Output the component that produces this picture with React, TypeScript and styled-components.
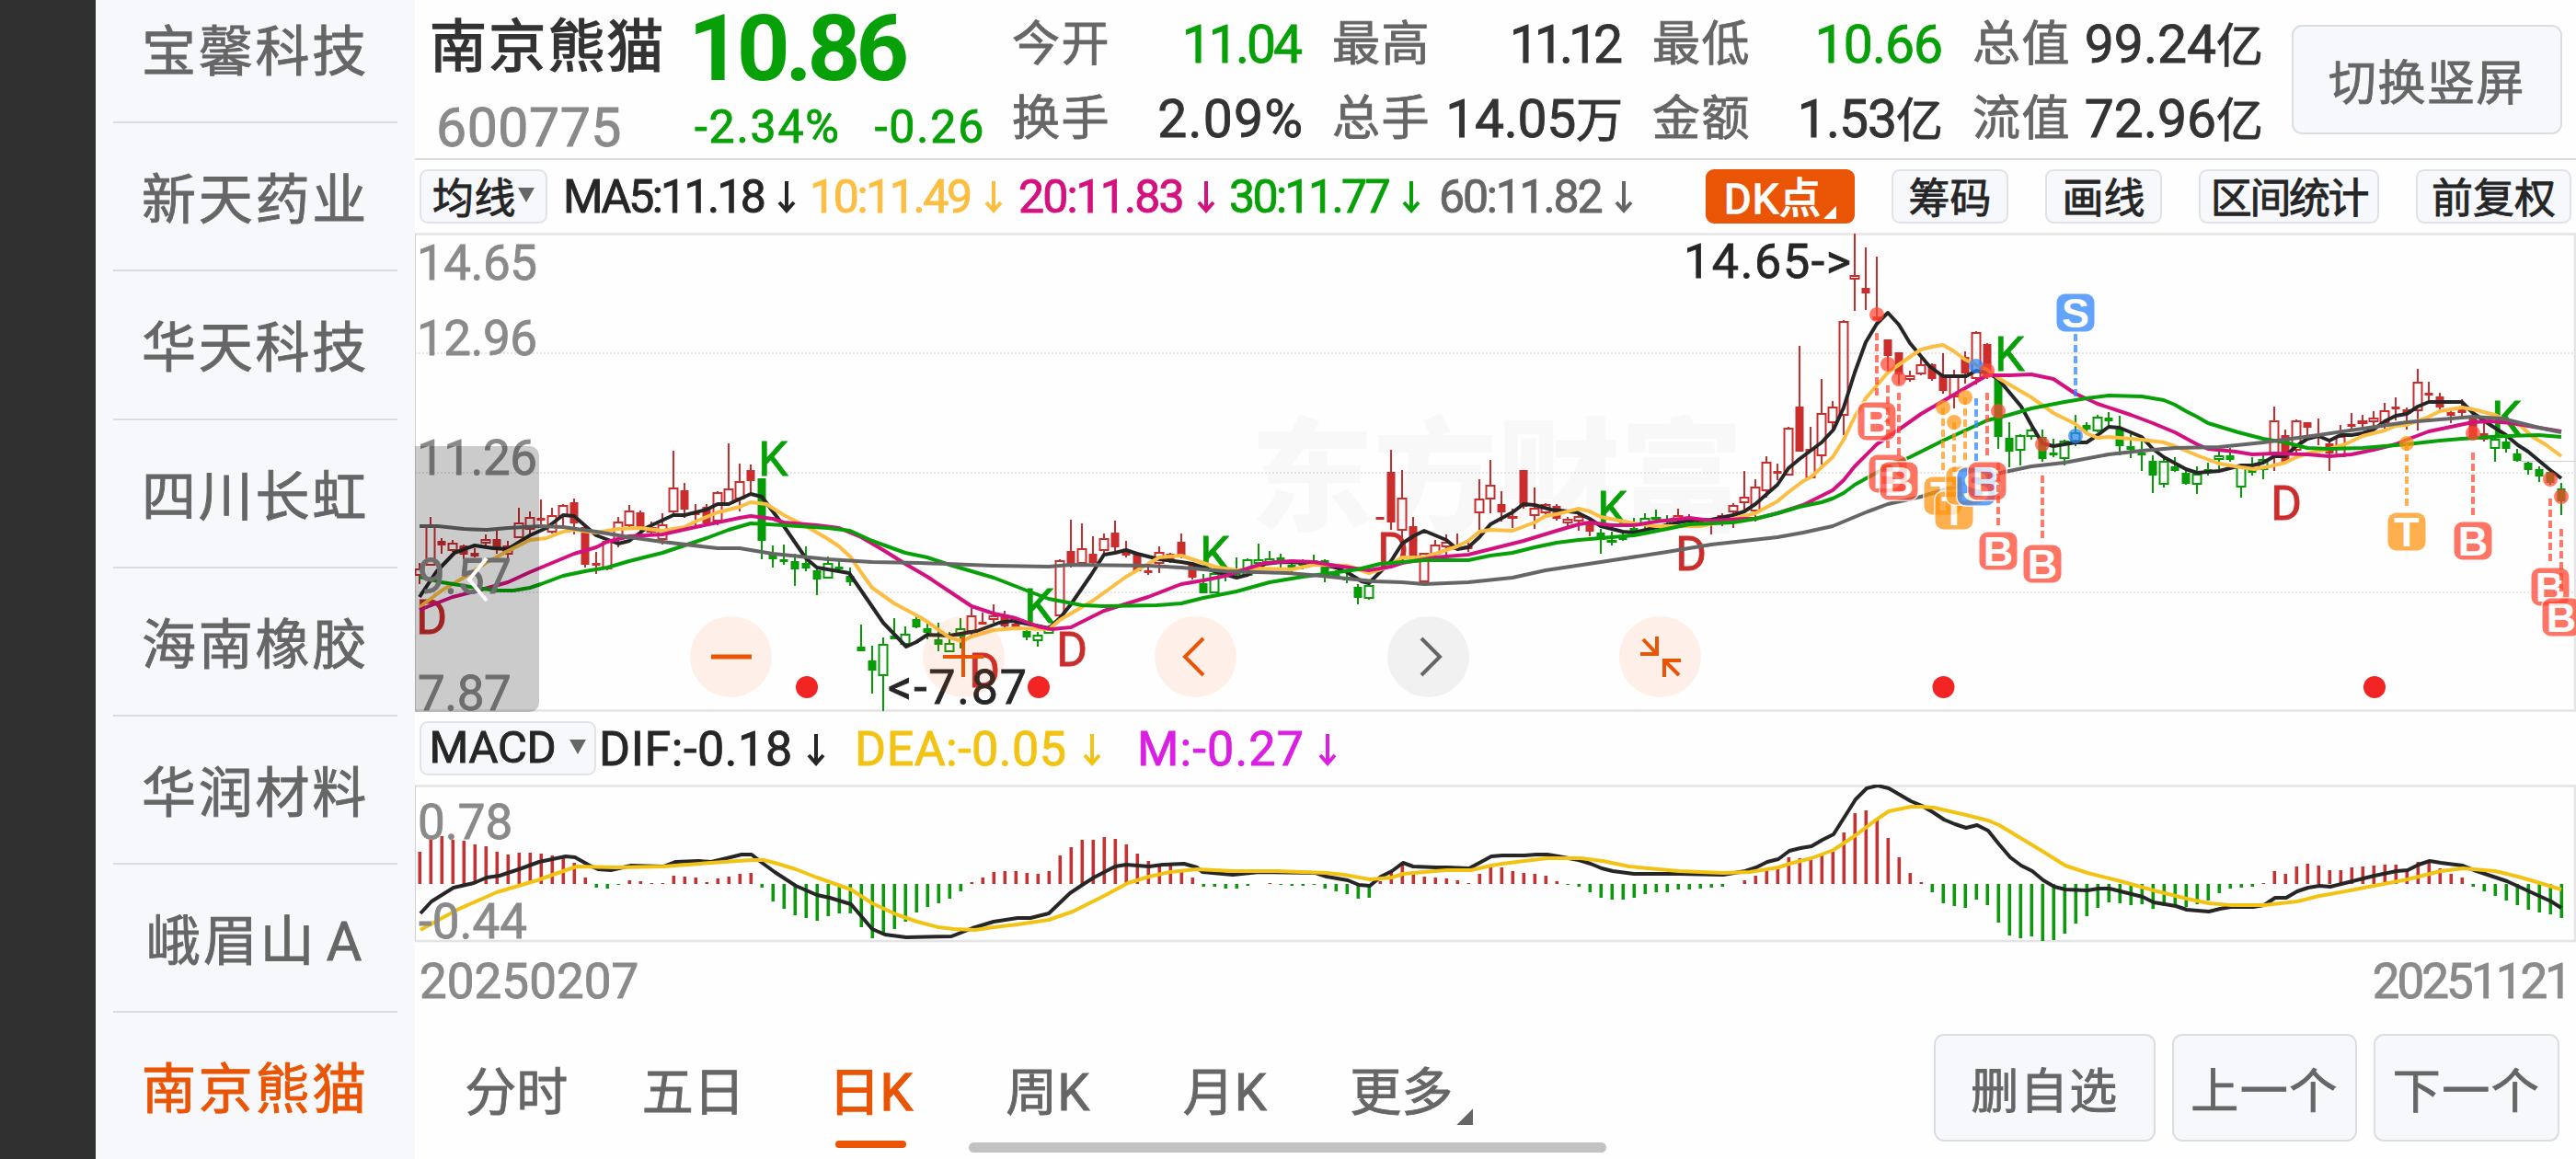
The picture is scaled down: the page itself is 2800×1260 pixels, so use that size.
import styled, { createGlobalStyle } from 'styled-components';

const GlobalStyle = createGlobalStyle`
	* {
		box-sizing: border-box;
	}
	body {
		margin: 0;
		background: #fff;
		font-family: Roboto, 'Noto Sans CJK SC', sans-serif;
		-webkit-text-stroke: 0.9px;
		overflow: hidden;
	}
`;

const Screen = styled.div`
	display: flex;
	width: 2800px;
	height: 1260px;
	overflow: hidden;
	background: #fefefe;
`;

const Notch = styled.div`
	flex: none;
	width: 104px;
	background: #303030;
`;

const Sidebar = styled.nav`
	flex: none;
	width: 347px;
	padding: 0 19px;
	background: #f6f8fb;
`;

const StockItem = styled.div<{ $active?: boolean }>`
	display: flex;
	align-items: center;
	justify-content: center;
	height: 161.2px;
	padding-bottom: 2px;
	border-bottom: 2px solid #d9dce0;
	font-size: 59px;
	letter-spacing: 2.8px;
	word-spacing: -7px;
	color: ${({ $active }) => ($active ? '#e95504' : '#666')};
	white-space: pre;

	&:first-child {
		margin-top: -27px;
	}
`;

const Main = styled.main`
	display: flex;
	flex-direction: column;
	width: 2349px;
`;

const Header = styled.header`
	display: flex;
	height: 174px;
	border-bottom: 2px solid #d9d9d9;
`;

const Quote = styled.div`
	display: grid;
	grid-template-columns: 281px 340px;
	grid-template-rows: 104px 68px;
	width: 649px;
	padding-left: 16px;
	align-items: center;
	line-height: 1;
`;

const Name = styled.div`
	font-size: 62px;
	letter-spacing: 2.2px;
	color: #333;
	white-space: nowrap;
	-webkit-text-stroke: 1.6px;
`;

const Price = styled.div`
	font-size: 101px;
	font-weight: 700;
	letter-spacing: -5.2px;
	color: #08a008;
	-webkit-text-stroke: 0;
`;

const Code = styled.div`
	padding-left: 7px;
	font-size: 59px;
	letter-spacing: 0.5px;
	color: #8a8a8a;
`;

const Change = styled.div`
	display: flex;
	gap: 37px;
	padding-left: 7px;
	font-size: 50px;
	letter-spacing: 1.8px;
	color: #08a008;
`;

const Stats = styled.div`
	display: grid;
	grid-template-columns: repeat(4, 316px);
	grid-template-rows: 81px 81px;
	column-gap: 32px;
	padding-top: 8px;
	line-height: 1;
`;

const Stat = styled.div`
	display: flex;
	align-items: center;
	justify-content: space-between;
	white-space: nowrap;
`;

const StatLabel = styled.span`
	font-size: 52px;
	letter-spacing: 1.5px;
	color: #666;
`;

const StatValue = styled.span<{ $down?: boolean; $spacing: number }>`
	margin-right: ${({ $spacing }) => -$spacing}px;
	font-size: 57px;
	letter-spacing: ${({ $spacing }) => $spacing}px;
	color: ${({ $down }) => ($down ? '#08a008' : '#333')};
`;

const Unit = styled.span`
	font-size: 51px;
`;

const PanelButton = styled.button<{ $width: number; $height: number }>`
	flex: none;
	width: ${({ $width }) => $width}px;
	height: ${({ $height }) => $height}px;
	padding: 0;
	border: 2px solid #dadee4;
	border-radius: 11px;
	background: #f6f8fb;
	color: #666;
	font-family: inherit;
	font-size: 52px;
	letter-spacing: 1.5px;
	-webkit-text-stroke: 0.9px;
`;

const RotateButton = styled(PanelButton)`
	margin: 27px 0 0 31px;
`;

const Toolbar = styled.div`
	display: flex;
	align-items: center;
	height: 79px;
	padding-left: 5px;
	line-height: 1;
`;

const Chip = styled.button<{ $width: number; $gap?: number; $active?: boolean; $spacing?: number }>`
	display: flex;
	flex: none;
	align-items: center;
	justify-content: center;
	gap: 2px;
	width: ${({ $width }) => $width}px;
	height: 59px;
	margin-right: ${({ $gap }) => $gap ?? 0}px;
	padding: 0 0 3px;
	border: 2px solid ${({ $active }) => ($active ? '#e95504' : '#dfe2e8')};
	border-radius: 9px;
	background: ${({ $active }) => ($active ? '#e95504' : '#f6f8fb')};
	color: ${({ $active }) => ($active ? '#fff' : '#262626')};
	font-family: inherit;
	font-size: 45px;
	letter-spacing: ${({ $spacing }) => $spacing ?? 0}px;
	white-space: nowrap;
	-webkit-text-stroke: ${({ $active }) => ($active ? 1.6 : 0.9)}px;
`;

const Caret = styled.i`
	width: 0;
	height: 0;
	border: 9px solid transparent;
	border-top: 16px solid #666;
	border-bottom: 0;
`;

const Corner = styled.i<{ $size: number; $color: string }>`
	align-self: flex-end;
	width: ${({ $size }) => $size}px;
	height: ${({ $size }) => $size}px;
	background: ${({ $color }) => $color};
	clip-path: polygon(100% 0, 100% 100%, 0 100%);
`;

const Averages = styled.div`
	display: grid;
	grid-template-columns: 268px 227px 229px 228px 290px;
	margin-left: 17px;
`;

const MacdValues = styled.div`
	display: grid;
	grid-template-columns: 278px 307px 230px;
	margin-left: 3px;
	padding-top: 2px;
`;

const Reading = styled.div<{ $color: string; $size: number; $spacing: number; $gap?: number }>`
	display: flex;
	align-items: center;
	gap: ${({ $gap }) => $gap ?? 15}px;
	color: ${({ $color }) => $color};
	font-size: ${({ $size }) => $size}px;
	letter-spacing: ${({ $spacing }) => $spacing}px;
	white-space: nowrap;
`;

const ChartArea = styled.section`
	position: relative;
	height: 521px;
`;

const ChartSvg = styled.svg`
	display: block;
`;

const Drawer = styled.div`
	position: absolute;
	left: 0;
	top: 232px;
	display: flex;
	align-items: center;
	justify-content: center;
	width: 135px;
	height: 289px;
	border-radius: 0 10px 10px 0;
	background: rgba(0, 0, 0, 0.2);
`;

const Controls = styled.div`
	position: absolute;
	left: 299px;
	top: 417px;
	display: flex;
	gap: 163.5px;
`;

const RoundButton = styled.button<{ $muted?: boolean }>`
	display: flex;
	align-items: center;
	justify-content: center;
	width: 89px;
	height: 88px;
	padding: 0;
	border: 0;
	border-radius: 50%;
	background: ${({ $muted }) => ($muted ? 'rgba(0, 0, 0, 0.05)' : 'rgba(250, 100, 20, 0.09)')};
	color: ${({ $muted }) => ($muted ? '#666' : '#e95504')};
`;

const Dates = styled.div`
	display: flex;
	justify-content: space-between;
	align-items: center;
	height: 85px;
	padding: 0 7px 0 5px;
	color: #8a8a8a;
	font-size: 53px;
	line-height: 1;
`;

const DateLabel = styled.span<{ $spacing?: number }>`
	letter-spacing: ${({ $spacing }) => $spacing ?? 0}px;
`;

const Footer = styled.footer`
	position: relative;
	display: flex;
	align-items: flex-start;
	height: 150px;
	padding: 14px 18px 0 14px;
`;

const Tabs = styled.div`
	display: flex;
	flex: 1;
`;

const Tab = styled.div<{ $active?: boolean }>`
	display: flex;
	position: relative;
	align-items: center;
	justify-content: center;
	width: 192.5px;
	height: 124px;
	padding-bottom: 7px;
	font-size: 56px;
	white-space: nowrap;
	color: ${({ $active }) => ($active ? '#e95504' : '#666')};
	-webkit-text-stroke: ${({ $active }) => ($active ? 1.6 : 0.9)}px;

	&::after {
		content: '';
		display: ${({ $active }) => ($active ? 'block' : 'none')};
		position: absolute;
		bottom: 0;
		left: 58px;
		width: 77px;
		height: 8px;
		border-radius: 4px;
		background: #e95504;
	}
`;

const More = styled.span`
	display: flex;
	margin-left: 21px;
	gap: 4px;
`;

const Actions = styled.div`
	display: flex;
	gap: 18px;
`;

const HomeBar = styled.div`
	position: absolute;
	left: 602px;
	bottom: 7px;
	width: 693px;
	height: 11px;
	border-radius: 6px;
	background: #c2c2c2;
`;

const RED = '#cb2c2c';
const GREEN = '#069c06';

const START_X = 456;
const STEP = 12;

// high, body top, body bottom, low, kind (capital = hollow body)
type Candle = [number, number, number, number, string];

const candles: Candle[] = [
	[612, 618, 626, 635, 'R'], [562, 572, 615, 615, 'R'], [585, 588, 593, 602, 'r'], [587, 590, 599, 600, 'R'], [592, 593, 603, 608, 'r'],
	[596, 601, 605, 606, 'r'], [581, 586, 591, 593, 'R'], [577, 586, 595, 602, 'r'], [588, 593, 603, 610, 'R'], [552, 568, 585, 585, 'R'],
	[556, 562, 576, 583, 'R'], [543, 563, 563, 574, 'R'], [552, 560, 579, 580, 'R'], [548, 549, 562, 573, 'R'], [542, 546, 569, 581, 'r'],
	[573, 573, 614, 617, 'r'], [600, 612, 612, 624, 'R'], [587, 588, 619, 620, 'R'], [562, 567, 587, 595, 'R'], [549, 555, 572, 573, 'R'],
	[555, 557, 573, 580, 'r'], [567, 573, 579, 580, 'R'], [558, 570, 587, 592, 'R'], [490, 530, 557, 559, 'R'], [525, 533, 554, 563, 'r'],
	[548, 557, 557, 575, 'R'], [548, 551, 569, 570, 'r'], [534, 535, 567, 571, 'R'], [482, 531, 548, 550, 'R'], [504, 523, 543, 556, 'R'],
	[505, 511, 523, 537, 'r'], [520, 520, 588, 608, 'g'], [593, 603, 608, 617, 'g'], [592, 608, 608, 614, 'G'], [602, 610, 619, 637, 'g'],
	[594, 612, 618, 621, 'g'], [618, 620, 630, 647, 'g'], [605, 612, 629, 629, 'G'], [610, 616, 616, 620, 'G'], [617, 626, 633, 637, 'g'],
	[679, 703, 708, 708, 'g'], [702, 718, 729, 754, 'g'], [693, 700, 735, 773, 'G'], [672, 691, 695, 695, 'g'], [681, 689, 701, 702, 'G'],
	[670, 673, 682, 683, 'g'], [675, 683, 688, 695, 'g'], [677, 695, 701, 708, 'g'], [687, 699, 709, 709, 'G'], [672, 683, 692, 705, 'G'],
	[660, 669, 687, 692, 'R'], [666, 676, 676, 679, 'R'], [657, 669, 674, 677, 'R'], [664, 668, 681, 686, 'r'], [677, 678, 682, 682, 'r'],
	[683, 686, 693, 696, 'g'], [687, 690, 697, 703, 'G'], [680, 683, 689, 689, 'G'], [608, 609, 670, 670, 'R'], [565, 599, 613, 617, 'r'],
	[569, 596, 613, 613, 'R'], [583, 602, 612, 613, 'r'], [580, 585, 599, 602, 'R'], [566, 579, 595, 600, 'r'], [588, 600, 604, 606, 'r'],
	[600, 601, 621, 622, 'r'], [617, 620, 623, 625, 'r'], [594, 600, 613, 623, 'R'], [601, 602, 609, 612, 'r'], [580, 589, 606, 607, 'r'],
	[613, 614, 628, 630, 'r'], [624, 634, 645, 645, 'g'], [621, 623, 645, 645, 'G'], [615, 620, 627, 632, 'g'], [606, 620, 625, 628, 'g'],
	[607, 608, 626, 627, 'G'], [591, 608, 613, 614, 'G'], [599, 607, 613, 613, 'G'], [602, 606, 612, 618, 'g'], [612, 614, 614, 622, 'g'],
	[608, 612, 612, 619, 'g'], [603, 609, 609, 613, 'g'], [608, 609, 623, 633, 'g'], [620, 624, 624, 626, 'g'], [623, 627, 631, 634, 'g'],
	[635, 638, 650, 657, 'g'], [634, 636, 651, 652, 'G'], [562, 562, 562, 562, 'R'], [489, 513, 568, 576, 'r'], [511, 541, 577, 599, 'R'],
	[562, 572, 605, 612, 'r'], [601, 601, 633, 633, 'R'], [587, 592, 603, 605, 'R'], [581, 589, 595, 603, 'R'], [580, 595, 595, 597, 'R'],
	[590, 593, 597, 600, 'r'], [521, 542, 558, 576, 'R'], [500, 527, 543, 558, 'R'], [534, 548, 557, 567, 'r'], [553, 561, 564, 574, 'R'],
	[511, 511, 551, 553, 'r'], [530, 552, 561, 575, 'R'], [547, 548, 558, 562, 'R'], [548, 550, 564, 566, 'r'], [562, 564, 569, 572, 'R'],
	[557, 561, 567, 577, 'R'], [568, 570, 578, 583, 'r'], [575, 579, 587, 602, 'g'], [578, 587, 590, 593, 'G'], [580, 583, 587, 588, 'g'],
	[563, 574, 574, 579, 'G'], [558, 563, 570, 576, 'G'], [554, 562, 565, 567, 'G'], [560, 565, 565, 572, 'g'], [553, 560, 565, 567, 'R'],
	[559, 565, 567, 572, 'r'], [563, 566, 566, 568, 'r'], [565, 568, 568, 581, 'R'], [558, 560, 566, 572, 'R'], [547, 549, 557, 574, 'R'],
	[512, 540, 547, 555, 'R'], [521, 529, 556, 567, 'R'], [496, 502, 534, 541, 'R'], [504, 512, 512, 522, 'R'], [464, 465, 517, 517, 'R'],
	[376, 442, 491, 491, 'r'], [464, 488, 520, 520, 'R'], [412, 449, 496, 505, 'R'], [436, 442, 460, 470, 'R'], [348, 349, 452, 473, 'R'],
	[254, 299, 304, 338, 'R'], [269, 313, 319, 337, 'r'], [279, 344, 348, 348, 'r'], [369, 369, 387, 403, 'r'], [383, 383, 407, 418, 'r'],
	[403, 408, 413, 415, 'R'], [388, 396, 407, 408, 'R'], [395, 396, 412, 414, 'r'], [384, 407, 425, 428, 'r'], [402, 407, 432, 444, 'R'],
	[382, 388, 406, 417, 'r'], [360, 361, 412, 418, 'R'], [373, 374, 410, 412, 'r'], [410, 411, 475, 488, 'g'], [459, 476, 491, 508, 'g'],
	[472, 473, 490, 506, 'G'], [465, 467, 475, 478, 'G'], [467, 475, 499, 502, 'g'], [477, 492, 495, 497, 'g'], [478, 479, 499, 506, 'G'],
	[451, 470, 480, 485, 'G'], [459, 462, 467, 473, 'g'], [451, 453, 469, 470, 'G'], [448, 454, 458, 464, 'g'], [452, 465, 485, 495, 'g'],
	[472, 485, 489, 498, 'g'], [479, 492, 492, 512, 'G'], [495, 501, 517, 536, 'g'], [498, 501, 527, 530, 'G'], [497, 507, 512, 513, 'g'],
	[512, 514, 526, 527, 'g'], [507, 515, 527, 537, 'G'], [503, 510, 510, 517, 'g'], [485, 495, 500, 510, 'G'], [487, 495, 500, 502, 'g'],
	[505, 507, 530, 541, 'G'], [497, 510, 514, 517, 'g'], [493, 499, 511, 521, 'G'], [442, 457, 495, 512, 'R'], [467, 473, 502, 504, 'r'],
	[456, 457, 490, 495, 'R'], [459, 459, 465, 475, 'r'], [455, 472, 472, 484, 'R'], [479, 482, 493, 512, 'r'], [462, 474, 497, 497, 'R'],
	[449, 461, 461, 467, 'R'], [451, 457, 461, 468, 'R'], [447, 454, 459, 465, 'R'], [438, 446, 460, 467, 'R'], [432, 442, 445, 457, 'r'],
	[443, 445, 450, 467, 'r'], [401, 415, 447, 468, 'R'], [415, 427, 427, 436, 'R'], [427, 431, 443, 446, 'r'], [447, 448, 452, 460, 'r'],
	[434, 445, 449, 453, 'r'], [452, 454, 475, 475, 'r'], [457, 471, 478, 480, 'r'], [475, 477, 488, 502, 'G'], [475, 480, 488, 492, 'g'],
	[488, 493, 501, 502, 'g'], [502, 503, 511, 516, 'g'], [507, 510, 518, 524, 'g'], [513, 513, 525, 527, 'g'], [525, 531, 545, 560, 'g'],
];

const averageLines = [
	{
		color: '#fbbe42',
		points:
			'456,660 480,642 504,628 528,612 552,599 576,587 594,585 612,578 624,576 648,579 672,575 696,574 720,577 744,573 756,567 780,557 804,551 816,546 833,548 852,560 876,572 900,586 912,594 924,605 940,628 948,639 972,656 1000,671 1008,676 1032,693 1046,697 1056,692 1080,685 1104,683 1140,684 1152,674 1188,653 1224,627 1248,613 1260,606 1284,604 1296,608 1320,616 1344,620 1368,618 1404,619 1428,614 1464,615 1488,623 1504,618 1524,606 1548,606 1560,602 1584,594 1596,588 1608,578 1620,576 1644,577 1668,568 1680,561 1692,559 1716,553 1728,556 1740,562 1776,569 1800,572 1848,572 1872,567 1908,558 1932,545 1944,535 1960,523 1968,519 1992,497 2004,478 2016,453 2028,433 2052,405 2076,388 2088,380 2100,377 2112,375 2124,382 2136,391 2160,402 2172,411 2208,432 2232,449 2256,461 2268,471 2280,476 2292,475 2328,478 2352,481 2364,485 2388,495 2412,504 2436,508 2450,510 2467,507 2484,503 2496,497 2508,493 2532,488 2549,483 2568,474 2592,468 2604,463 2616,462 2640,453 2652,447 2676,443 2688,445 2712,451 2724,457 2740,463 2753,475 2768,484 2784,496',
	},
	{
		color: '#d3127f',
		points:
			'456,663 492,649 516,643 552,633 576,622 624,602 648,595 660,589 684,583 720,581 756,573 804,563 816,561 840,564 852,568 888,571 912,574 936,584 960,598 984,613 1008,627 1032,643 1056,659 1080,667 1104,672 1128,681 1143,684 1164,682 1200,664 1248,649 1284,635 1308,631 1332,626 1356,618 1375,612 1404,610 1428,611 1452,615 1488,620 1512,616 1524,612 1560,606 1596,603 1620,597 1656,588 1692,577 1716,570 1728,568 1752,571 1776,571 1800,567 1836,563 1860,566 1896,564 1908,564 1932,558 1960,549 1968,545 1992,533 2004,522 2016,507 2040,483 2064,467 2088,450 2112,436 2136,422 2160,408 2184,408 2208,407 2232,412 2256,428 2280,439 2316,451 2340,460 2364,470 2388,483 2400,488 2430,491 2448,494 2472,493 2508,494 2532,496 2556,494 2580,489 2604,483 2616,478 2640,469 2664,464 2688,459 2707,458 2730,460 2760,465 2784,469',
	},
	{
		color: '#08a008',
		points:
			'456,627 480,633 511,638 540,642 558,642 576,639 588,635 612,626 636,621 660,617 684,610 720,601 744,593 768,585 792,576 816,569 852,571 900,574 924,577 948,588 984,601 1008,606 1032,614 1080,628 1116,642 1140,651 1176,658 1200,659 1257,658 1284,656 1308,650 1344,643 1380,633 1416,627 1440,624 1476,619 1500,613 1524,611 1548,609 1596,609 1620,604 1644,601 1668,595 1692,590 1716,587 1752,584 1776,582 1812,575 1836,570 1860,569 1884,568 1908,564 1932,558 1956,551 1980,546 1992,542 2004,536 2016,527 2052,507 2076,497 2112,479 2136,468 2160,457 2184,451 2208,444 2244,437 2268,433 2292,430 2328,431 2352,435 2364,440 2376,447 2388,453 2400,460 2433,470 2460,477 2484,481 2508,487 2532,488 2568,487 2616,483 2652,479 2676,477 2724,474 2760,473 2784,475',
	},
	{
		color: '#666',
		points:
			'456,572 476,572 504,575 529,576 552,574 588,572 612,573 648,578 684,584 720,589 780,596 804,596 840,602 900,608 948,611 1000,612 1080,615 1140,616 1164,614 1248,615 1284,617 1332,621 1400,623 1436,626 1464,629 1493,632 1524,633 1548,635 1596,633 1644,628 1680,620 1740,611 1812,600 1860,592 1896,588 1932,584 1960,579 1992,572 2004,567 2028,557 2052,548 2088,540 2124,529 2170,515 2208,507 2244,503 2292,494 2328,490 2364,487 2412,486 2460,481 2520,473 2568,466 2616,459 2664,455 2688,453 2720,455 2740,460 2760,465 2784,470',
	},
];

const ma5Line =
	'456,649 474,622 494,601 516,593 536,596 552,597 576,582 594,574 612,560 624,561 648,582 672,591 684,588 704,573 732,560 744,560 768,554 780,548 792,548 816,537 828,540 852,572 876,607 888,617 923,623 960,677 985,703 996,698 1008,690 1032,691 1044,689 1062,686 1086,677 1100,675 1121,679 1140,683 1152,672 1164,657 1186,625 1200,603 1212,601 1224,598 1236,602 1260,608 1284,611 1296,613 1320,621 1344,628 1356,625 1375,613 1392,611 1428,612 1452,617 1464,622 1480,632 1488,634 1500,622 1512,610 1524,591 1536,583 1548,577 1560,582 1572,587 1584,597 1596,595 1608,584 1620,570 1644,557 1656,548 1668,549 1686,554 1714,557 1728,564 1740,572 1764,578 1776,579 1793,575 1824,568 1836,566 1860,565 1884,560 1896,556 1908,548 1932,527 1944,509 1956,499 1968,490 1980,481 1993,467 2004,443 2016,405 2028,372 2040,352 2052,340 2064,353 2076,373 2097,398 2112,409 2137,409 2148,403 2160,405 2172,412 2197,442 2208,462 2220,482 2232,485 2256,481 2268,481 2280,473 2292,464 2304,465 2328,475 2340,488 2352,497 2376,510 2388,514 2412,512 2436,506 2448,506 2460,503 2472,496 2484,496 2496,485 2508,477 2520,474 2532,479 2544,473 2556,473 2568,471 2580,467 2592,458 2604,452 2616,450 2628,442 2640,437 2664,437 2676,437 2688,449 2707,462 2724,473 2737,484 2748,491 2760,501 2772,511 2784,520';

const macdBars = [
	35, 48, 52, 48, 47, 43, 41, 35, 32, 34, 34, 33, 31, 29, 23, 7, -4, -5, -1, 4, 3, 1, 1, 9, 8, 7, 2, 6, 8, 11, 12,
	-4, -19, -27, -34, -37, -40, -35, -32, -32, -47, -59, -56, -49, -41, -31, -25, -21, -16, -8, 2, 7, 13, 14, 14, 12,
	11, 14, 31, 40, 48, 48, 51, 49, 43, 33, 25, 22, 21, 15, 7, -3, -3, -5, -5, -2, 0, 1, -1, -2, -2, -1, -5, -8, -11,
	-16, -15, 3, 13, 23, 14, 8, 7, 6, 4, 1, 11, 21, 18, 14, 12, 11, 9, 3, -1, -3, -9, -15, -17, -17, -15, -11, -9, -9,
	-6, -6, -5, -4, -3, 0, 4, 9, 17, 19, 29, 28, 26, 32, 35, 56, 77, 80, 70, 50, 29, 12, 2, -9, -21, -24, -26, -17,
	-23, -42, -56, -59, -57, -62, -61, -54, -43, -35, -26, -20, -21, -23, -22, -27, -24, -24, -25, -22, -18, -10, -5,
	-4, -3, 1, 14, 11, 19, 22, 20, 15, 15, 18, 19, 20, 21, 21, 16, 24, 23, 17, 11, 7, -3, -8, -13, -18, -23, -28,
	-31, -33, -37,
];

const difLine =
	'457,993 469,980 493,965 515,960 529,954 543,952 567,944 586,937 615,931 625,932 641,941 650,945 664,946 686,941 721,942 734,937 759,936 773,937 790,933 806,929 817,929 827,937 842,948 865,963 888,973 902,976 925,983 948,1010 962,1016 985,1019 1034,1018 1057,1009 1080,1002 1106,998 1120,998 1140,993 1163,971 1178,961 1189,954 1212,942 1224,940 1249,942 1264,940 1287,939 1301,943 1307,948 1340,951 1369,948 1430,949 1442,953 1465,957 1477,962 1489,963 1501,953 1513,947 1525,938 1536,942 1561,943 1573,943 1597,944 1621,931 1633,930 1657,930 1670,929 1682,929 1694,931 1716,935 1729,939 1741,944 1753,947 1776,950 1800,950 1825,950 1873,951 1897,947 1909,943 1921,937 1933,934 1945,925 1957,922 1969,920 1981,913 1993,907 2005,888 2017,869 2029,857 2041,854 2053,857 2077,871 2089,876 2101,883 2113,891 2125,896 2137,900 2149,897 2161,903 2173,918 2185,932 2197,941 2209,947 2221,957 2233,964 2245,967 2269,968 2281,966 2293,966 2317,972 2329,975 2341,981 2365,985 2377,989 2401,991 2413,988 2425,986 2449,986 2461,984 2473,976 2485,976 2497,969 2509,965 2521,963 2533,964 2545,961 2581,952 2605,947 2617,946 2629,940 2641,936 2653,938 2677,941 2689,946 2725,958 2749,969 2773,980 2784,987';

const deaLine =
	'457,1011 497,989 540,970 584,957 615,946 627,942 670,943 721,942 773,938 816,935 830,935 842,938 865,945 888,954 925,967 948,982 974,994 997,1002 1020,1008 1037,1010 1060,1011 1080,1008 1106,1005 1140,1000 1166,991 1200,974 1226,960 1249,953 1272,948 1301,945 1340,947 1388,947 1442,949 1461,951 1489,956 1513,954 1525,950 1548,948 1573,946 1599,946 1621,941 1633,939 1657,936 1682,933 1718,933 1742,936 1771,942 1825,947 1873,949 1902,948 1933,943 1945,939 1969,933 1993,924 2017,908 2041,890 2053,882 2077,877 2088,877 2102,878 2137,886 2161,892 2173,897 2221,926 2245,941 2269,949 2305,958 2341,968 2377,977 2401,982 2425,984 2461,984 2497,980 2521,974 2533,972 2570,965 2617,956 2653,947 2677,944 2712,947 2737,953 2761,960 2784,967';

const signals = [
	{ text: 'K', x: 824, y: 517 }, { text: 'K', x: 1113, y: 677 }, { text: 'K', x: 1304, y: 620 },
	{ text: 'K', x: 1736, y: 571 }, { text: 'K', x: 2168, y: 403 }, { text: 'K', x: 2708, y: 473 },
	{ text: 'D', x: 452, y: 689 }, { text: 'D', x: 1053, y: 747 }, { text: 'D', x: 1148, y: 724 },
	{ text: 'D', x: 1497, y: 616 }, { text: 'D', x: 1821, y: 620 }, { text: 'D', x: 2468, y: 565 },
];

// x, y of the trade dot, y of the badge
type Trade = [string, number, number, number];

const trades: Trade[] = [
	['B', 2040, 342, 458], ['B', 2052, 396, 515], ['B', 2064, 412, 523], ['T', 2112, 443, 539], ['T', 2124, 459, 555],
	['T', 2136, 432, 528], ['S', 2148, 398, 529], ['B', 2160, 403, 523], ['B', 2172, 447, 599], ['B', 2220, 483, 613],
	['S', 2256, 474, 340], ['T', 2616, 482, 578], ['B', 2688, 471, 588], ['B', 2772, 521, 638], ['B', 2784, 540, 671],
];

const tradeColors: Record<string, string> = { B: '#ff4632', T: '#ff9512', S: '#2c84ff' };

const CandleMark = ({ candle, index }: { candle: Candle; index: number }) => {
	const [high, top, bottom, low, kind] = candle;
	const x = START_X + index * STEP;
	const color = kind.toLowerCase() === 'r' ? RED : GREEN;
	const hollow = kind === kind.toUpperCase() && bottom - top > 2;
	const height = Math.max(bottom - top, 3);
	return (
		<g stroke={color} strokeWidth={2}>
			<path d={`M${x} ${high}V${top}M${x} ${bottom}V${low}`} />
			{hollow ? (
				<rect x={x - 4.5} y={top + 1} width={9} height={height - 2} fill='none' />
			) : (
				<rect x={x - 4.5} y={top} width={9} height={height} fill={color} stroke='none' />
			)}
		</g>
	);
};

const TradeMark = ({ trade }: { trade: Trade }) => {
	const [kind, x, dot, badge] = trade;
	const color = tradeColors[kind];
	const stem = badge > dot ? badge - 96 : badge + 23;
	return (
		<g>
			<circle cx={x} cy={dot} r={8} fill={color} fillOpacity={0.72} />
			<path d={`M${x} ${stem}v72`} stroke={color} strokeOpacity={0.72} strokeWidth={4} strokeDasharray='8 4' />
			<g opacity={0.74}>
				<rect x={x - 22} y={badge - 22} width={44} height={44} rx={10} fill='#fff' />
				<rect x={x - 20.5} y={badge - 20.5} width={41} height={41} rx={9} fill={color} />
				<text
					x={x}
					y={badge + 16}
					fill='#fff'
					fontSize={45}
					fontWeight={700}
					fontFamily='Liberation Sans'
					textAnchor='middle'
				>
					{kind}
				</text>
			</g>
		</g>
	);
};

const PriceChart = () => (
	<ChartSvg width={2349} height={521} viewBox='451 253 2349 521'>
		<text x={1359} y={567} fontSize={134} fontWeight={900} fill='#f8f8f8' fontFamily='Noto Sans CJK SC'>
			东方财富
		</text>
		<path d='M451 384H2800M451 514H2800M451 644H2800' stroke='#dedede' strokeWidth={1.5} strokeDasharray='2 2' />
		<path d='M451 254.5H2799V772.5H451' fill='none' stroke='#e4e4e4' strokeWidth={2.5} />
		<path d='M451.5 254V773' stroke='#d0d0d0' />
		<path d='M2737 501.5H2800' stroke='#cfcfcf' />
		{signals.map((s) => (
			<text
				key={s.x}
				x={s.x}
				y={s.y}
				fontSize={52}
				fill={s.text === 'K' ? '#08a008' : RED}
				stroke={s.text === 'K' ? '#08a008' : RED}
				strokeWidth={0.8}
			>
				{s.text}
			</text>
		))}
		{candles.map((candle, i) => (
			<CandleMark key={i} candle={candle} index={i} />
		))}
		<g fill='none' strokeWidth={4} strokeLinejoin='round'>
			<polyline points={ma5Line} stroke='#262626' />
			{averageLines.map((line) => (
				<polyline key={line.color} points={line.points} stroke={line.color} />
			))}
		</g>
		<g fontSize={53} fill='#8a8a8a' stroke='#8a8a8a' strokeWidth={0.8} letterSpacing={-0.5}>
			<text x={453} y={304}>14.65</text>
			<text x={453} y={386}>12.96</text>
			<text x={453} y={516}>11.26</text>
			<text x={454} y={645}>9.57</text>
			<text x={454} y={772}>7.87</text>
		</g>
		<g fontSize={52} fill='#262626' stroke='#262626' strokeWidth={0.8}>
			<text x={1830} y={302} textLength={182}>14.65-&gt;</text>
			<text x={965} y={765} textLength={151}>&lt;-7.87</text>
		</g>
		<g fill='#f32424'>
			{[877, 1129, 2112.5, 2581].map((x) => (
				<circle key={x} cx={x} cy={747} r={12} />
			))}
		</g>
		{trades.map((trade) => (
			<TradeMark key={trade[1]} trade={trade} />
		))}
	</ChartSvg>
);

const MacdChart = () => (
	<ChartSvg width={2349} height={172} viewBox='451 853 2349 172'>
		<path d='M451 854.5H2799V1023H451' fill='none' stroke='#e4e4e4' strokeWidth={2.5} />
		<path d='M451.5 854V1023' stroke='#d0d0d0' />
		{macdBars.map((value, i) => (
			<rect
				key={i}
				x={START_X + i * STEP - 1.5}
				y={value > 0 ? 961 - value : 961}
				width={3.6}
				height={Math.abs(value)}
				fill={value > 0 ? '#bf3434' : '#119611'}
			/>
		))}
		<g fill='none' strokeWidth={4} strokeLinejoin='round'>
			<polyline points={difLine} stroke='#262626' />
			<polyline points={deaLine} stroke='#f3c313' />
		</g>
		<g fontSize={53} fill='#8a8a8a' stroke='#8a8a8a' strokeWidth={0.8}>
			<text x={454} y={912}>0.78</text>
			<text x={455} y={1020}>-0.44</text>
		</g>
	</ChartSvg>
);

const DownArrow = () => (
	<svg width='20' height='36' viewBox='0 0 20 36' fill='none' stroke='currentColor' strokeWidth='4'>
		<path d='M10 1V33M2 24L10 33L18 24' />
	</svg>
);

const stocks = ['宝馨科技', '新天药业', '华天科技', '四川长虹', '海南橡胶', '华润材料', '峨眉山 A', '南京熊猫'];

const stats = [
	{ label: '今开', value: '11.04', down: true, spacing: -3 },
	{ label: '最高', value: '11.12', spacing: -5 },
	{ label: '最低', value: '10.66', down: true, spacing: -1 },
	{ label: '总值', value: '99.24', unit: '亿', spacing: 0 },
	{ label: '换手', value: '2.09%', spacing: 1.2 },
	{ label: '总手', value: '14.05', unit: '万', spacing: -0.3 },
	{ label: '金额', value: '1.53', unit: '亿', spacing: -1 },
	{ label: '流值', value: '72.96', unit: '亿', spacing: 0 },
];

const averages = [
	{ text: 'MA5:11.18', color: '#262626', spacing: -2.7 },
	{ text: '10:11.49', color: '#fbbe42', spacing: -2.4 },
	{ text: '20:11.83', color: '#d3127f', spacing: -1.9 },
	{ text: '30:11.77', color: '#08a008', spacing: -2.6 },
	{ text: '60:11.82', color: '#666', spacing: -2.2 },
];

const App = () => {
	return (
		<Screen>
			<GlobalStyle />
			<Notch />
			<Sidebar>
				{stocks.map((stock, i) => (
					<StockItem key={stock} $active={i === stocks.length - 1}>
						{stock}
					</StockItem>
				))}
			</Sidebar>
			<Main>
				<Header>
					<Quote>
						<Name>南京熊猫</Name>
						<Price>10.86</Price>
						<Code>600775</Code>
						<Change>
							<span>-2.34%</span>
							<span>-0.26</span>
						</Change>
					</Quote>
					<Stats>
						{stats.map((s) => (
							<Stat key={s.label}>
								<StatLabel>{s.label}</StatLabel>
								<StatValue $down={s.down} $spacing={s.spacing}>
									{s.value}
									{s.unit && <Unit>{s.unit}</Unit>}
								</StatValue>
							</Stat>
						))}
					</Stats>
					<RotateButton $width={294} $height={119}>切换竖屏</RotateButton>
				</Header>

				<Toolbar>
					<Chip $width={139} $spacing={0.5}>
						均线
						<Caret />
					</Chip>
					<Averages>
						{averages.map((a) => (
							<Reading key={a.text} $color={a.color} $size={50} $spacing={a.spacing}>
								{a.text}
								<DownArrow />
							</Reading>
						))}
					</Averages>
					<Chip $width={162} $gap={40} $spacing={1} $active>
						DK点
						<Corner $size={14} $color='#fff' />
					</Chip>
					<Chip $width={127} $gap={40}>筹码</Chip>
					<Chip $width={127} $gap={40}>画线</Chip>
					<Chip $width={196} $gap={40} $spacing={-2.4}>区间统计</Chip>
					<Chip $width={169}>前复权</Chip>
				</Toolbar>

				<ChartArea>
					<PriceChart />
					<Controls>
						<RoundButton>
							<svg width='44' height='44' fill='none' stroke='currentColor' strokeWidth='5'>
								<path d='M0 22H44' />
							</svg>
						</RoundButton>
						<RoundButton>
							<svg width='44' height='44' fill='none' stroke='currentColor' strokeWidth='4'>
								<path d='M0 22H44M22 0V44' />
							</svg>
						</RoundButton>
						<RoundButton>
							<svg width='44' height='44' fill='none' stroke='currentColor' strokeWidth='4'>
								<path d='M30 2L10 22L30 42' />
							</svg>
						</RoundButton>
						<RoundButton $muted>
							<svg width='44' height='44' fill='none' stroke='currentColor' strokeWidth='4'>
								<path d='M15 2L35 22L15 42' />
							</svg>
						</RoundButton>
						<RoundButton>
							<svg width='44' height='44' fill='none' stroke='currentColor' strokeWidth='4'>
								<path d='M18 0V19H0M3 3L18 19M44 26H26V44M26 26L42 42' />
							</svg>
						</RoundButton>
					</Controls>
					<Drawer>
						<svg width='26' height='50' fill='none' stroke='#fff' strokeWidth='4'>
							<path d='M23 2L4 25L23 48' />
						</svg>
					</Drawer>
				</ChartArea>

				<Toolbar>
					<Chip $width={192}>
						<Reading $color='#262626' $size={49} $spacing={-0.3}>
							MACD
							<Caret />
						</Reading>
					</Chip>
					<MacdValues>
						<Reading $color='#262626' $size={52} $spacing={0.6}>
							DIF:-0.18
							<DownArrow />
						</Reading>
						<Reading $color='#f3c313' $size={52} $spacing={0.5} $gap={18}>
							DEA:-0.05
							<DownArrow />
						</Reading>
						<Reading $color='#da1fe2' $size={52} $spacing={1.2}>
							M:-0.27
							<DownArrow />
						</Reading>
					</MacdValues>
				</Toolbar>
				<MacdChart />

				<Dates>
					<DateLabel>20250207</DateLabel>
					<DateLabel $spacing={-3}>20251121</DateLabel>
				</Dates>

				<Footer>
					<Tabs>
						<Tab>分时</Tab>
						<Tab>五日</Tab>
						<Tab $active>日K</Tab>
						<Tab>周K</Tab>
						<Tab>月K</Tab>
						<Tab>
							<More>
								更多
								<Corner $size={18} $color='#666' />
							</More>
						</Tab>
					</Tabs>
					<Actions>
						<PanelButton $width={241} $height={117}>删自选</PanelButton>
						<PanelButton $width={201} $height={117}>上一个</PanelButton>
						<PanelButton $width={202} $height={117}>下一个</PanelButton>
					</Actions>
					<HomeBar />
				</Footer>
			</Main>
		</Screen>
	);
};

export default App;
